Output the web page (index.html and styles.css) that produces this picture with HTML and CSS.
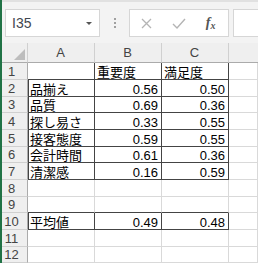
FILE: index.html
```html
<!DOCTYPE html>
<html lang="ja">
  <head>
    <meta charset="UTF-8" />
    <meta name="viewport" content="width=device-width, initial-scale=1.0" />
    <title>Sheet</title>
    <link rel="stylesheet" href="styles.css">
  </head>
  <body>
    <div class="window">
      <div class="toolbar">
        <div class="namebox">
          <span class="ref">I35</span>
          <span class="caret"></span>
        </div>
        <div class="grip"><i></i><i></i><i></i></div>
        <div class="fbtns">
          <span class="fbtn">
            <svg width="11" height="11" viewBox="0 0 11 11"><path d="M1 1L10 10M10 1L1 10" stroke="#b4b4b4" stroke-width="1.3" fill="none"/></svg>
          </span>
          <span class="fbtn">
            <svg width="14" height="11" viewBox="0 0 14 11"><path d="M1 6L5 10L13 1" stroke="#b4b4b4" stroke-width="1.4" fill="none"/></svg>
          </span>
          <span class="fbtn fx"><i>f</i><i class="sub">x</i></span>
        </div>
        <div class="finput"></div>
      </div>

      <div class="sheet">
        <div class="cell hd col corner">
          <svg width="11" height="11" viewBox="0 0 11 11"><path d="M11 0L11 11L0 11Z" fill="#bdbdbd"/></svg>
        </div>
        <div class="cell hd col">A</div>
        <div class="cell hd col">B</div>
        <div class="cell hd col">C</div>
        <div class="cell hd col last"></div>

        <div class="cell hd rowh">1</div>
        <div class="cell b"></div>
        <div class="cell b">重要度</div>
        <div class="cell b">満足度</div>
        <div class="cell"></div>

        <div class="cell hd rowh">2</div>
        <div class="cell b bl">品揃え</div>
        <div class="cell b num">0.56</div>
        <div class="cell b num">0.50</div>
        <div class="cell"></div>

        <div class="cell hd rowh">3</div>
        <div class="cell b bl">品質</div>
        <div class="cell b num">0.69</div>
        <div class="cell b num">0.36</div>
        <div class="cell"></div>

        <div class="cell hd rowh">4</div>
        <div class="cell b bl">探し易さ</div>
        <div class="cell b num">0.33</div>
        <div class="cell b num">0.55</div>
        <div class="cell"></div>

        <div class="cell hd rowh">5</div>
        <div class="cell b bl">接客態度</div>
        <div class="cell b num">0.59</div>
        <div class="cell b num">0.55</div>
        <div class="cell"></div>

        <div class="cell hd rowh">6</div>
        <div class="cell b bl">会計時間</div>
        <div class="cell b num">0.61</div>
        <div class="cell b num">0.36</div>
        <div class="cell"></div>

        <div class="cell hd rowh">7</div>
        <div class="cell b bl">清潔感</div>
        <div class="cell b num">0.16</div>
        <div class="cell b num">0.59</div>
        <div class="cell"></div>

        <div class="cell hd rowh">8</div>
        <div class="cell"></div>
        <div class="cell"></div>
        <div class="cell"></div>
        <div class="cell"></div>

        <div class="cell hd rowh">9</div>
        <div class="cell bb"></div>
        <div class="cell bb"></div>
        <div class="cell bb"></div>
        <div class="cell"></div>

        <div class="cell hd rowh">10</div>
        <div class="cell b bl">平均値</div>
        <div class="cell b num">0.49</div>
        <div class="cell b num">0.48</div>
        <div class="cell"></div>

        <div class="cell hd rowh">11</div>
        <div class="cell"></div>
        <div class="cell"></div>
        <div class="cell"></div>
        <div class="cell"></div>

        <div class="cell hd rowh">12</div>
        <div class="cell"></div>
        <div class="cell"></div>
        <div class="cell"></div>
        <div class="cell"></div>
      </div>
    </div>
  </body>
</html>
```

FILE: styles.css
```css
body {
  margin: 0;
  font-family: "Liberation Sans", "Noto Sans CJK JP", sans-serif;
}

.window {
  display: flex;
  flex-direction: column;
  height: 263px;
  border-left: 2px solid #217346;
  overflow: hidden;
}

/* formula bar */
.toolbar {
  display: flex;
  align-items: flex-start;
  height: 43px;
  box-sizing: border-box;
  padding-top: 9px;
  background: #f3f3f3;
  border-top: 2px solid #e1e1e1;
  padding-top: 7px;
}
.namebox {
  display: flex;
  align-items: center;
  justify-content: space-between;
  width: 95px;
  height: 28px;
  box-sizing: border-box;
  margin-left: 3px;
  padding: 0 6px 0 6px;
  background: #fff;
  border: 1px solid #d6d6d6;
}
.ref {
  font-size: 14px;
  color: #3f4750;
}
.caret {
  width: 0;
  height: 0;
  border-left: 3px solid transparent;
  border-right: 3px solid transparent;
  border-top: 3px solid #555;
  margin-right: 1px;
}
.grip {
  display: flex;
  flex-direction: column;
  align-items: center;
  gap: 2px;
  width: 29px;
  padding-top: 9px;
}
.grip i {
  width: 2px;
  height: 2px;
  background: #a0a0a0;
}
.fbtns {
  display: grid;
  grid-template-columns: 1fr 1fr 1fr;
  width: 100px;
  height: 28px;
  box-sizing: border-box;
  background: #fff;
  border: 1px solid #d6d6d6;
}
.fbtn {
  display: flex;
  align-items: center;
  justify-content: center;
}
.fx {
  font-family: "Liberation Serif", serif;
  font-size: 14px;
  font-weight: bold;
  color: #555;
  padding-right: 2px;
}
.fx .sub {
  font-size: 10px;
  margin-top: 4px;
}
.finput {
  flex: 1;
  height: 28px;
  box-sizing: border-box;
  margin-left: 4px;
  background: #fff;
  border: 1px solid #d6d6d6;
  border-right: none;
}

/* grid */
.sheet {
  display: grid;
  grid-template-columns: 26px 67px 67px 67px 1fr;
  grid-template-rows: 20px repeat(4, 17px 17px 16px);
  background: #fff;
}
.cell {
  display: flex;
  align-items: flex-end;
  padding: 0 3px 0 2px;
  font-size: 13px;
  line-height: 12px;
  color: #000;
  white-space: nowrap;
  overflow: hidden;
  border-right: 1px solid #d9d9d9;
  border-bottom: 1px solid #d9d9d9;
}
.num {
  justify-content: flex-end;
}
.hd {
  align-items: center;
  justify-content: center;
  line-height: normal;
  background: #efefef;
  color: #444;
  border-color: #d0d0d0;
}
.col {
  border-bottom-color: #ababab;
}
.last {
  border-right: none;
}
.rowh {
  padding: 0 6px 0 0;
  border-right-color: #ababab;
}
.corner {
  justify-content: flex-end;
  align-items: flex-end;
  padding: 0 2px 2px 0;
}
.b {
  border-right-color: #444;
  border-bottom-color: #444;
}
.bb {
  border-bottom-color: #444;
}
.bl {
  box-shadow: inset 1px 0 #444;
}
```
